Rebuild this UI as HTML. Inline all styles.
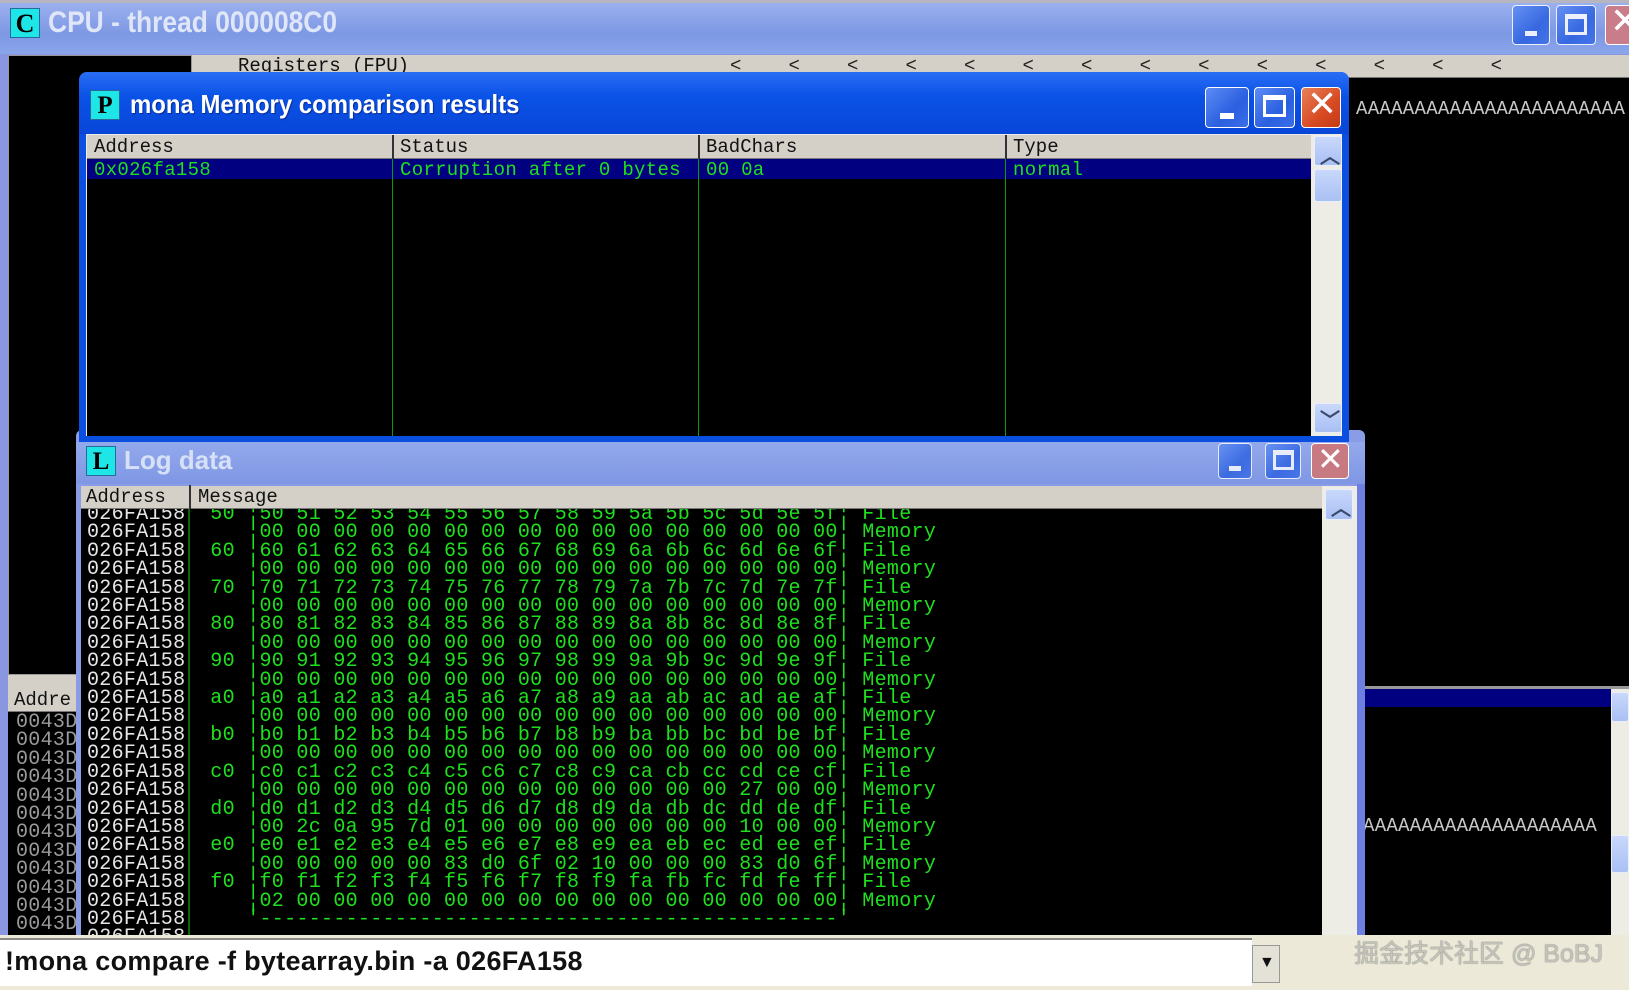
<!DOCTYPE html>
<html><head><meta charset="utf-8">
<style>
*{margin:0;padding:0;box-sizing:border-box}
body{width:1629px;height:990px;overflow:hidden;background:#000;position:relative;font-family:"Liberation Sans",sans-serif}
.a{position:absolute}
.mono{font-family:"Liberation Mono","DejaVu Sans Mono",monospace;font-size:20px;letter-spacing:0.3px;white-space:pre;line-height:18.4px}
.btn{position:absolute;border:1.5px solid #fff;border-radius:4px;background:linear-gradient(135deg,#5d8cf5,#2a5fe0 60%,#3c6ee8)}
.close{background:linear-gradient(135deg,#e8805a,#d74a22 60%,#c43c18)}
.hdr{background:#d4d0c8;border-bottom:1px solid #777;font-family:"Liberation Mono",monospace;font-size:19px;color:#111;line-height:22px}
.sb{background:linear-gradient(#c9d8fb,#a9c0f4);border:1px solid #e8eefc;border-radius:3px}
</style></head><body>

<div class="a" style="left:0;top:0;width:1629px;height:54px;background:linear-gradient(#9bb0ee,#7d98e4 60%,#8aa5ea);border-top:3px solid #b6b6c0"></div>
<div class="a" style="left:10px;top:8px;width:30px;height:30px;background:#1ee6e6;border:1px solid #2a6a9a;font:bold 26px 'Liberation Serif',serif;color:#000;text-align:center;line-height:30px">C</div>
<div class="a" style="left:48px;top:6px;font-size:30px;font-weight:bold;color:#dfe6f8;transform:scaleX(0.88);transform-origin:left">CPU - thread 000008C0</div>
<div class="btn" style="left:1512px;top:5px;width:38px;height:40px;opacity:.85"><div class="a" style="left:12px;top:25px;width:12px;height:5px;background:#fff"></div></div>
<div class="btn" style="left:1556px;top:5px;width:40px;height:40px;opacity:.85"><div class="a" style="left:8px;top:8px;width:22px;height:21px;border:3px solid #fff;border-top-width:5px"></div></div>
<div class="btn close" style="left:1605px;top:5px;width:40px;height:40px;background:#c97d8a"><div class="a" style="left:4px;top:-6px;color:#fff;font-size:36px">✕</div></div>

<div class="a" style="left:0;top:54px;width:1629px;height:884px;background:#8a96df"></div>
<div class="a" style="left:8px;top:55px;width:184px;height:620px;background:#000;border:1px solid #999"></div>
<div class="a" style="left:192px;top:55px;width:42px;height:22px;background:#d4d0c8"></div>
<div class="a hdr" style="left:234px;top:55px;width:1395px;height:23px;padding-left:4px">Registers (FPU)</div>
<div class="a mono" style="left:730px;top:57px;color:#222;font-size:19px">&lt;    &lt;    &lt;    &lt;    &lt;    &lt;    &lt;    &lt;    &lt;    &lt;    &lt;    &lt;    &lt;    &lt;</div>
<div class="a" style="left:1349px;top:78px;width:280px;height:610px;background:#000"></div>
<div class="a mono" style="left:1356px;top:100px;color:#c8c8c8;font-size:19px">AAAAAAAAAAAAAAAAAAAAAAA</div>
<div class="a" style="left:1365px;top:686px;width:264px;height:3px;background:#999"></div>
<div class="a" style="left:1365px;top:689px;width:246px;height:18px;background:#000080"></div>
<div class="a" style="left:1365px;top:707px;width:246px;height:228px;background:#000"></div>
<div class="a" style="left:1611px;top:689px;width:18px;height:246px;background:#eeede5"></div>
<div class="a sb" style="left:1611px;top:692px;width:18px;height:30px"></div>
<div class="a sb" style="left:1611px;top:835px;width:18px;height:38px"></div>
<div class="a mono" style="left:1363px;top:817px;color:#c8c8c8;font-size:19px">AAAAAAAAAAAAAAAAAAAA</div>

<div class="a" style="left:8px;top:675px;width:68px;height:14px;background:#d4d0c8"></div>
<div class="a hdr" style="left:8px;top:689px;width:68px;height:23px;padding-left:6px;overflow:hidden">Addre</div>
<div class="a mono" style="left:8px;top:712px;width:68px;height:226px;background:#000;color:#9a9a9a;padding:2px 0 0 8px;overflow:hidden">0043D
0043D
0043D
0043D
0043D
0043D
0043D
0043D
0043D
0043D
0043D
0043D</div>

<div class="a" style="left:76px;top:430px;width:1289px;height:508px;background:#8a9ce6;border-radius:6px 6px 0 0"></div>
<div class="a" style="left:76px;top:442px;width:1289px;height:42px;background:linear-gradient(#93a9ec,#7f97e4)"></div>
<div class="a" style="left:86px;top:446px;width:30px;height:30px;background:#1ee6e6;border:1px solid #2a6a9a;font:bold 25px 'Liberation Serif',serif;color:#000;text-align:center;line-height:30px">L</div>
<div class="a" style="left:124px;top:445px;font-size:26px;font-weight:bold;color:#d6e0f6">Log data</div>
<div class="btn" style="left:1218px;top:443px;width:34px;height:36px;opacity:.8"><div class="a" style="left:10px;top:22px;width:12px;height:5px;background:#fff"></div></div>
<div class="btn" style="left:1265px;top:443px;width:36px;height:36px;opacity:.8"><div class="a" style="left:7px;top:6px;width:21px;height:20px;border:3px solid #fff;border-top-width:5px"></div></div>
<div class="btn close" style="left:1311px;top:443px;width:38px;height:36px;background:#c87a82"><div class="a" style="left:5px;top:-4px;color:#fff;font-size:32px">✕</div></div>
<div class="a" style="left:81px;top:486px;width:1276px;height:450px;background:#eeede5"></div>
<div class="a hdr" style="left:81px;top:486px;width:1241px;height:23px"><span class="a" style="left:5px;top:0">Address</span><span class="a" style="left:108px;top:-1px;width:2px;height:24px;background:#333"></span><span class="a" style="left:117px;top:0">Message</span></div>
<div class="a sb" style="left:1325px;top:489px;width:28px;height:31px"><div class="a" style="left:5px;top:2px;color:#3a4a6a;font:bold 20px sans-serif">︿</div></div>
<div class="a" style="left:81px;top:509px;width:1241px;height:426px;background:#000;overflow:hidden">
 <div class="a" style="left:107px;top:0;width:2px;height:426px;background:#0a6a0a"></div>
 <div class="a mono" style="left:6px;top:-3px;color:#e6e6e6">026FA158
026FA158
026FA158
026FA158
026FA158
026FA158
026FA158
026FA158
026FA158
026FA158
026FA158
026FA158
026FA158
026FA158
026FA158
026FA158
026FA158
026FA158
026FA158
026FA158
026FA158
026FA158
026FA158
026FA158</div>
 <div class="a mono" style="left:117px;top:-3px;color:#1ee01e"> 50 ¦50 51 52 53 54 55 56 57 58 59 5a 5b 5c 5d 5e 5f¦ File
    ¦00 00 00 00 00 00 00 00 00 00 00 00 00 00 00 00¦ Memory
 60 ¦60 61 62 63 64 65 66 67 68 69 6a 6b 6c 6d 6e 6f¦ File
    ¦00 00 00 00 00 00 00 00 00 00 00 00 00 00 00 00¦ Memory
 70 ¦70 71 72 73 74 75 76 77 78 79 7a 7b 7c 7d 7e 7f¦ File
    ¦00 00 00 00 00 00 00 00 00 00 00 00 00 00 00 00¦ Memory
 80 ¦80 81 82 83 84 85 86 87 88 89 8a 8b 8c 8d 8e 8f¦ File
    ¦00 00 00 00 00 00 00 00 00 00 00 00 00 00 00 00¦ Memory
 90 ¦90 91 92 93 94 95 96 97 98 99 9a 9b 9c 9d 9e 9f¦ File
    ¦00 00 00 00 00 00 00 00 00 00 00 00 00 00 00 00¦ Memory
 a0 ¦a0 a1 a2 a3 a4 a5 a6 a7 a8 a9 aa ab ac ad ae af¦ File
    ¦00 00 00 00 00 00 00 00 00 00 00 00 00 00 00 00¦ Memory
 b0 ¦b0 b1 b2 b3 b4 b5 b6 b7 b8 b9 ba bb bc bd be bf¦ File
    ¦00 00 00 00 00 00 00 00 00 00 00 00 00 00 00 00¦ Memory
 c0 ¦c0 c1 c2 c3 c4 c5 c6 c7 c8 c9 ca cb cc cd ce cf¦ File
    ¦00 00 00 00 00 00 00 00 00 00 00 00 00 27 00 00¦ Memory
 d0 ¦d0 d1 d2 d3 d4 d5 d6 d7 d8 d9 da db dc dd de df¦ File
    ¦00 2c 0a 95 7d 01 00 00 00 00 00 00 00 10 00 00¦ Memory
 e0 ¦e0 e1 e2 e3 e4 e5 e6 e7 e8 e9 ea eb ec ed ee ef¦ File
    ¦00 00 00 00 00 83 d0 6f 02 10 00 00 00 83 d0 6f¦ Memory
 f0 ¦f0 f1 f2 f3 f4 f5 f6 f7 f8 f9 fa fb fc fd fe ff¦ File
    ¦02 00 00 00 00 00 00 00 00 00 00 00 00 00 00 00¦ Memory
    '-----------------------------------------------'</div>
</div>
<div class="a" style="left:1357px;top:484px;width:8px;height:454px;background:#6d7fe0"></div>

<div class="a" style="left:79px;top:72px;width:1270px;height:370px;background:#0b4fe0;border-radius:8px 8px 0 0"></div>
<div class="a" style="left:79px;top:72px;width:1270px;height:62px;background:linear-gradient(#2a6ef5,#0a52e6 40%,#0846d8);border-radius:8px 8px 0 0"></div>
<div class="a" style="left:90px;top:90px;width:30px;height:30px;background:#1ee6e6;border:1px solid #2a6a9a;font:bold 25px 'Liberation Serif',serif;color:#000;text-align:center;line-height:30px">P</div>
<div class="a" style="left:130px;top:89px;font-size:26px;font-weight:bold;color:#fff;text-shadow:1px 1px 1px #0a2a90;transform:scaleX(0.92);transform-origin:left">mona Memory comparison results</div>
<div class="btn" style="left:1205px;top:87px;width:44px;height:41px"><div class="a" style="left:14px;top:25px;width:14px;height:6px;background:#fff"></div></div>
<div class="btn" style="left:1254px;top:87px;width:41px;height:41px"><div class="a" style="left:8px;top:7px;width:23px;height:22px;border:3px solid #fff;border-top-width:5px"></div></div>
<div class="btn close" style="left:1301px;top:87px;width:40px;height:41px"><div class="a" style="left:5px;top:-5px;color:#fff;font-size:36px">✕</div></div>
<div class="a" style="left:86px;top:134px;width:1256px;height:302px;background:#eeede5"></div>
<div class="a hdr" style="left:87px;top:135px;width:1224px;height:24px">
 <span class="a" style="left:7px;top:1px">Address</span>
 <span class="a" style="left:305px;top:0;width:2px;height:24px;background:#333"></span>
 <span class="a" style="left:313px;top:1px">Status</span>
 <span class="a" style="left:611px;top:0;width:2px;height:24px;background:#333"></span>
 <span class="a" style="left:619px;top:1px">BadChars</span>
 <span class="a" style="left:918px;top:0;width:2px;height:24px;background:#333"></span>
 <span class="a" style="left:926px;top:1px">Type</span>
</div>
<div class="a" style="left:87px;top:159px;width:1224px;height:277px;background:#000"></div>
<div class="a" style="left:87px;top:159px;width:1224px;height:20px;background:#000080"></div>
<div class="a" style="left:392px;top:159px;width:1px;height:277px;background:#0a9a0a"></div>
<div class="a" style="left:698px;top:159px;width:1px;height:277px;background:#0a9a0a"></div>
<div class="a" style="left:1005px;top:159px;width:1px;height:277px;background:#0a9a0a"></div>
<div class="a mono" style="left:94px;top:161px;color:#1ee01e;font-size:19px">0x026fa158</div>
<div class="a mono" style="left:400px;top:161px;color:#1ee01e;font-size:19px">Corruption after 0 bytes</div>
<div class="a mono" style="left:706px;top:161px;color:#1ee01e;font-size:19px">00 0a</div>
<div class="a mono" style="left:1013px;top:161px;color:#1ee01e;font-size:19px">normal</div>
<div class="a sb" style="left:1314px;top:136px;width:28px;height:30px"><div class="a" style="left:5px;top:3px;color:#3a4a6a;font:bold 20px sans-serif">︿</div></div>
<div class="a sb" style="left:1314px;top:169px;width:28px;height:33px"></div>
<div class="a sb" style="left:1314px;top:403px;width:28px;height:30px"><div class="a" style="left:5px;top:0;color:#3a4a6a;font:bold 20px sans-serif">﹀</div></div>

<div class="a" style="left:0;top:935px;width:1629px;height:55px;background:#ece9d8"></div>
<div class="a" style="left:0;top:938px;width:1252px;height:48px;background:#fff;border-top:2px solid #888"></div>
<div class="a" style="left:5px;top:946px;font-size:27px;font-weight:bold;color:#111;letter-spacing:0.3px">!mona compare -f bytearray.bin -a 026FA158</div>
<div class="a" style="left:1252px;top:945px;width:28px;height:38px;background:#e4e2d6;border:1px solid #999"><div class="a" style="left:6px;top:8px;font-size:16px;color:#111">▼</div></div>
<div class="a" style="left:1354px;top:934px;font-family:'Liberation Sans','Noto Sans CJK SC',sans-serif;font-size:25px;color:#c4c4bc;text-shadow:0 0 1px #444">掘金技术社区 @ BoBJ</div>
</body></html>
